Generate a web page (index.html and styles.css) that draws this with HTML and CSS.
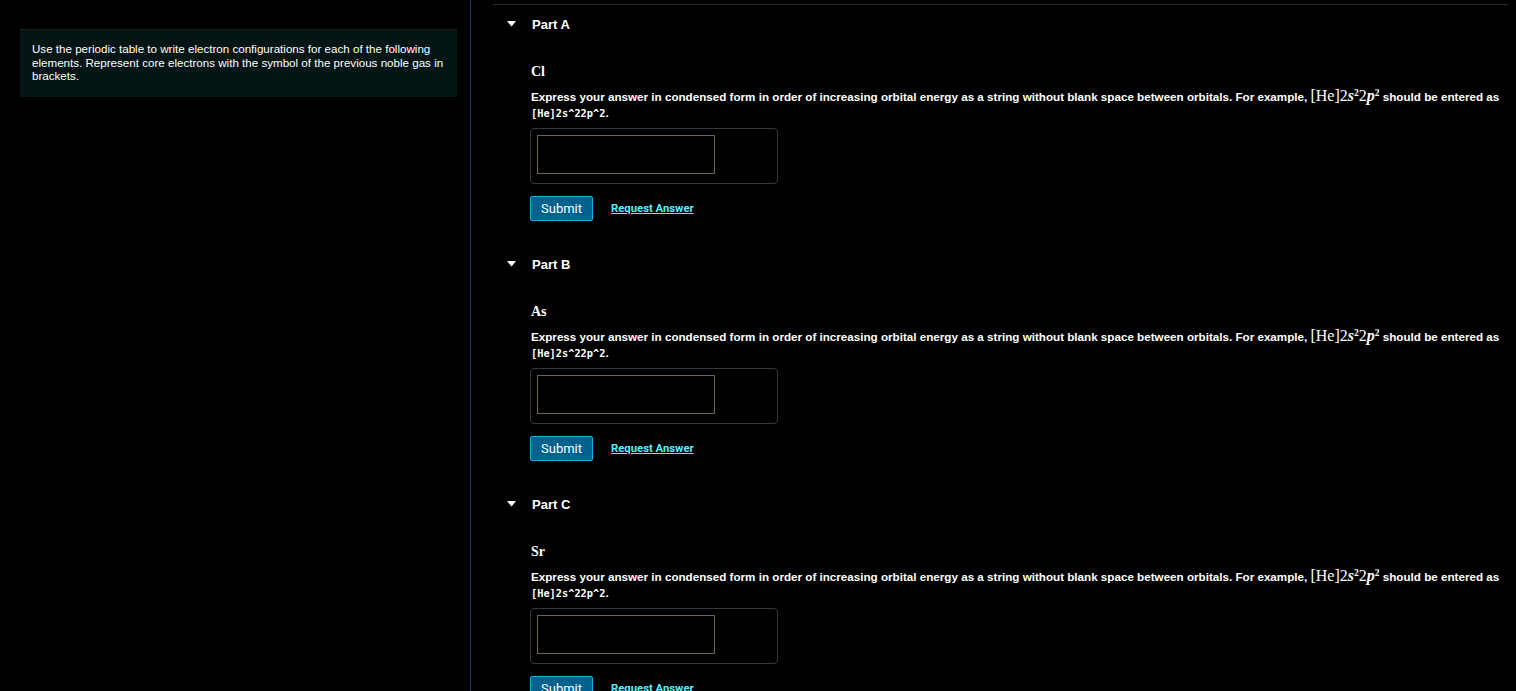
FILE: index.html
```html
<!DOCTYPE html>
<html>
<head>
<meta charset="utf-8">
<link rel="stylesheet" href="styles.css">
</head>
<body>
<div class="page">
  <aside class="left">
    <div class="intro">Use the periodic table to write electron configurations for each of the following elements. Represent core electrons with the symbol of the previous noble gas in brackets.</div>
  </aside>
  <main class="right">
    <section class="part">
      <div class="part-head"><svg class="caret" width="9" height="6" viewBox="0 0 9 6"><path d="M0 0 H9 L4.5 5.5 Z" fill="#fff"/></svg><span>Part A</span></div>
      <div class="part-body">
        <div class="elem">Cl</div>
        <p class="instr">Express your answer in condensed form in order of increasing orbital energy as a string without blank space between orbitals. For example, <span class="math">[He]2<i>s</i><sup>2</sup>2<i>p</i><sup>2</sup></span> should be entered as <code>[He]2s^22p^2</code>.</p>
        <div class="answer"><div class="field"></div></div>
        <div class="actions"><button class="submit">Submit</button><a class="req" href="#">Request Answer</a></div>
      </div>
    </section>
    <section class="part">
      <div class="part-head"><svg class="caret" width="9" height="6" viewBox="0 0 9 6"><path d="M0 0 H9 L4.5 5.5 Z" fill="#fff"/></svg><span>Part B</span></div>
      <div class="part-body">
        <div class="elem">As</div>
        <p class="instr">Express your answer in condensed form in order of increasing orbital energy as a string without blank space between orbitals. For example, <span class="math">[He]2<i>s</i><sup>2</sup>2<i>p</i><sup>2</sup></span> should be entered as <code>[He]2s^22p^2</code>.</p>
        <div class="answer"><div class="field"></div></div>
        <div class="actions"><button class="submit">Submit</button><a class="req" href="#">Request Answer</a></div>
      </div>
    </section>
    <section class="part">
      <div class="part-head"><svg class="caret" width="9" height="6" viewBox="0 0 9 6"><path d="M0 0 H9 L4.5 5.5 Z" fill="#fff"/></svg><span>Part C</span></div>
      <div class="part-body">
        <div class="elem">Sr</div>
        <p class="instr">Express your answer in condensed form in order of increasing orbital energy as a string without blank space between orbitals. For example, <span class="math">[He]2<i>s</i><sup>2</sup>2<i>p</i><sup>2</sup></span> should be entered as <code>[He]2s^22p^2</code>.</p>
        <div class="answer"><div class="field"></div></div>
        <div class="actions"><button class="submit">Submit</button><a class="req" href="#">Request Answer</a></div>
      </div>
    </section>
  </main>
</div>
</body>
</html>
```

FILE: styles.css
```css
html, body {
  margin: 0;
  padding: 0;
  background: #000;
  color: #fff;
  font-family: "Liberation Sans", Arial, sans-serif;
  height: 100%;
  overflow: hidden;
}
.page {
  display: flex;
  height: 691px;
}
.left {
  width: 471px;
  flex: none;
  border-right: 1px solid #1c3b6e;
  box-sizing: border-box;
  padding: 29px 13px 0 20px;
}
.intro {
  background: #031514;
  border-top: 1px solid #14201f;
  padding: 12px 8px 14px 12px;
  font-size: 11.6px;
  line-height: 13.5px;
  color: #fff;
}
.right {
  flex: 1;
  padding: 4px 8px 0 22px;
}
.part:first-child {
  border-top: 1px solid #1f2a2d;
}
.part-head {
  display: flex;
  align-items: center;
  height: 20px;
  margin-top: 9px;
  padding-left: 14px;
  font-size: 13px;
  font-weight: bold;
}
.part + .part .part-head {
  margin-top: 33px;
}
.caret {
  margin-right: 16px;
}
.part-body {
  padding-left: 37px;
}
.elem {
  margin-top: 28px;
  height: 20px;
  line-height: 20px;
  padding-left: 1px;
  font-family: "Liberation Serif", "Times New Roman", serif;
  font-weight: bold;
  font-size: 14px;
}
.instr {
  margin: 7px 0 0 0;
  padding-left: 1px;
  font-size: 11.65px;
  font-weight: bold;
  line-height: 16px;
}
.math {
  font-family: "Liberation Serif", "Times New Roman", serif;
  font-weight: normal;
  font-size: 16px;
  line-height: 12px;
}
.math i {
  font-style: italic;
  font-weight: bold;
}
.math sup {
  font-size: 9.5px;
  font-weight: bold;
  line-height: 0;
  vertical-align: 5px;
}
code {
  font-family: "DejaVu Sans Mono", "Liberation Mono", monospace;
  font-size: 10.3px;
  font-weight: bold;
  line-height: 12px;
}
.answer {
  margin-top: 7px;
  width: 248px;
  height: 56px;
  box-sizing: border-box;
  border: 1px solid #34383b;
  border-radius: 4px;
  padding: 6px;
}
.field {
  width: 178px;
  height: 39px;
  box-sizing: border-box;
  border: 1px solid #6e6353;
}
.actions {
  display: flex;
  align-items: center;
  margin-top: 12px;
  height: 25px;
}
.submit {
  width: 63px;
  height: 25px;
  background: #00628c;
  border: 1px solid #1aa9e2;
  border-radius: 2px;
  color: #fff;
  font-family: Roboto, "Liberation Sans", sans-serif;
  font-size: 13px;
  padding: 0;
  margin: 0;
}
.req {
  margin-left: 18px;
  color: #55eeff;
  font-family: Roboto, "Liberation Sans", sans-serif;
  font-weight: bold;
  font-size: 11.3px;
  text-decoration: underline;
}
```
